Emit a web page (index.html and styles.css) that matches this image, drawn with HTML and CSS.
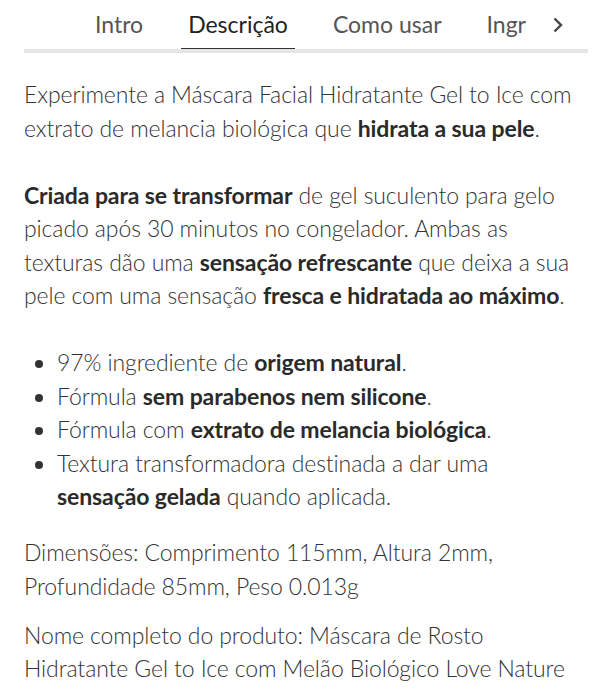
FILE: index.html
```html
<!DOCTYPE html>
<html lang="pt">
<head>
    <meta charset="UTF-8">
    <meta name="viewport" content="width=device-width, initial-scale=1.0">
    <title>Descrição do produto</title>
    <link rel="stylesheet" href="styles.css">
</head>
<body>
    <nav class="tabs">
        <ul class="tab-list">
            <li class="tab">Intro</li>
            <li class="tab active">Descrição</li>
            <li class="tab">Como usar</li>
            <li class="tab">Ingr</li>
        </ul>
        <button class="tab-next" aria-label="Seguinte">
            <svg width="12" height="16" viewBox="0 0 12 16"><polyline points="2.5,1.5 9,8 2.5,14.5" fill="none" stroke="#444" stroke-width="2.4"/></svg>
        </button>
    </nav>
    <div class="description">
        <p>Experimente a Máscara Facial Hidratante Gel to Ice com extrato de melancia biológica que <b>hidrata a sua pele</b>.</p>
        <p><b>Criada para se transformar</b> de gel suculento para gelo picado após 30 minutos no congelador. Ambas as texturas dão uma <b>sensação refrescante</b> que deixa a sua pele com uma sensação <b>fresca e hidratada ao máximo</b>.</p>
        <ul class="features">
            <li>97% ingrediente de <b>origem natural</b>.</li>
            <li>Fórmula <b>sem parabenos nem silicone</b>.</li>
            <li>Fórmula com <b>extrato de melancia biológica</b>.</li>
            <li>Textura transformadora destinada a dar uma <b>sensação gelada</b> quando aplicada.</li>
        </ul>
        <p class="specs">Dimensões: Comprimento 115mm, Altura 2mm, Profundidade 85mm, Peso 0.013g</p>
        <p class="specs">Nome completo do produto: Máscara de Rosto Hidratante Gel to Ice com Melão Biológico Love Nature</p>
    </div>
</body>
</html>
```

FILE: styles.css
```css
body {
    font-family: Lato, "Noto Sans", sans-serif;
    color: #333;
    background-color: #fff;
    margin: 0;
    padding: 0 24px;
}
.tabs {
    display: flex;
    align-items: center;
    border-bottom: 4px solid #e6e6e6;
    height: 49px;
    margin-right: 1px;
}
.tab-list {
    display: flex;
    list-style: none;
    margin: 0;
    padding: 0 0 0 64px;
    gap: 31px;
    height: 100%;
    flex: 1;
    overflow: hidden;
}
.tab {
    font-size: 23px;
    color: #555;
    padding: 0 7px;
    line-height: 48px;
    position: relative;
}
.tab.active {
    color: #222;
}
.tab.active::after {
    content: "";
    position: absolute;
    left: 0;
    right: 0;
    bottom: -5px;
    height: 6px;
    background-color: #333;
}
.tab-next {
    border: none;
    background: none;
    padding: 0;
    margin-right: 24px;
    display: flex;
}
.description {
    padding-top: 25px;
    font-size: 23px;
    font-weight: 300;
    letter-spacing: -0.1px;
    line-height: 33.5px;
}
.description p {
    margin: 0 0 33.5px;
}
.description b {
    font-weight: 700;
    color: #2a2a2a;
}
.features {
    margin: 0 0 22.5px;
    padding: 0 14px 0 33px;
}
.description p.specs {
    margin-bottom: 15.5px;
}
```
